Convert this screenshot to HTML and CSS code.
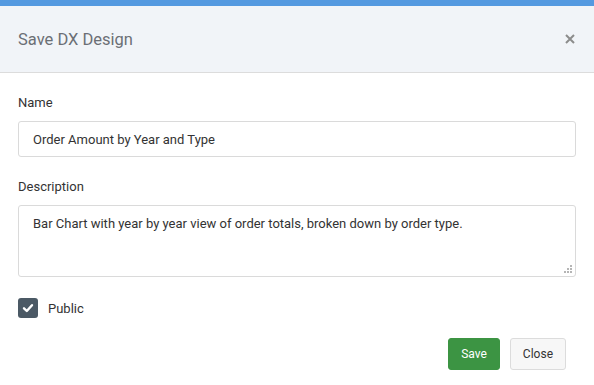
FILE: index.html
```html
<!DOCTYPE html>
<html>
<head>
    <title>Save DX Design</title>
    <link rel="stylesheet" href="styles.css">
</head>
<body>
    <div class="modal">
        <div class="modal-header">
            <h4 class="modal-title">Save DX Design</h4>
            <button class="close-x" type="button" aria-label="Close">
                <svg width="10" height="10" viewBox="0 0 10 10">
                    <path d="M1 1 L9 9 M9 1 L1 9" stroke="#8c8c8c" stroke-width="2"/>
                </svg>
            </button>
        </div>
        <div class="modal-body">
            <form class="form">
                <div class="form-group">
                    <label for="name">Name</label>
                    <input type="text" id="name" value="Order Amount by Year and Type">
                </div>
                <div class="form-group">
                    <label for="description">Description</label>
                    <div class="textarea-wrap">
                        <textarea id="description">Bar Chart with year by year view of order totals, broken down by order type.</textarea>
                        <svg class="grip" width="8" height="8" viewBox="0 0 8 8">
                            <rect x="6" y="0" width="2" height="2" fill="#b5b5b5"/>
                            <rect x="3" y="3" width="2" height="2" fill="#b5b5b5"/>
                            <rect x="6" y="3" width="2" height="2" fill="#b5b5b5"/>
                            <rect x="0" y="6" width="2" height="2" fill="#b5b5b5"/>
                            <rect x="3" y="6" width="2" height="2" fill="#b5b5b5"/>
                            <rect x="6" y="6" width="2" height="2" fill="#b5b5b5"/>
                        </svg>
                    </div>
                </div>
                <div class="check-row">
                    <span class="check-box">
                        <svg width="12" height="12" viewBox="0 0 12 12">
                            <path d="M2 6.3 L4.8 9 L10 3.2" fill="none" stroke="#fff" stroke-width="2.4" stroke-linecap="round" stroke-linejoin="round"/>
                        </svg>
                    </span>
                    <span class="check-label">Public</span>
                </div>
                <div class="actions">
                    <a href="#" class="btn btn-save">Save</a>
                    <a href="#" class="btn btn-close">Close</a>
                </div>
            </form>
        </div>
    </div>
</body>
</html>
```

FILE: styles.css
```css
body {
    margin: 0;
    background-color: #fff;
    font-family: 'Roboto', sans-serif;
    color: #333;
}

.modal {
    border-top: 6px solid #5499e0;
}

.modal-header {
    display: flex;
    align-items: center;
    justify-content: space-between;
    height: 66px;
    padding: 0 18px;
    background-color: #f1f4f8;
    border-bottom: 1px solid #dcdcdc;
}

.modal-title {
    margin: 0;
    font-size: 16.5px;
    font-weight: normal;
    color: #6b6f75;
}

.close-x {
    display: flex;
    border: none;
    background: none;
    padding: 0;
    margin-right: 1px;
    cursor: pointer;
}

.modal-body {
    padding: 20px 18px 15px;
}

.form-group {
    margin-bottom: 20px;
}

label {
    display: block;
    font-size: 13px;
    line-height: 20px;
    margin-bottom: 8px;
}

input,
textarea {
    display: block;
    width: 100%;
    box-sizing: border-box;
    border: 1px solid #dadada;
    border-radius: 3px;
    font-family: 'Roboto', sans-serif;
    font-size: 13px;
    color: #333;
    padding: 0 14px;
}

input {
    height: 36px;
}

.textarea-wrap {
    position: relative;
}

textarea {
    height: 72px;
    padding-top: 8px;
    line-height: 20px;
    resize: none;
}

.grip {
    position: absolute;
    right: 4px;
    bottom: 4px;
}

.check-row {
    display: flex;
    align-items: center;
    gap: 10px;
    margin-top: 21px;
}

.check-box {
    display: flex;
    align-items: center;
    justify-content: center;
    width: 20px;
    height: 20px;
    border-radius: 3px;
    background-color: #4b5965;
}

.check-label {
    font-size: 13px;
}

.actions {
    display: flex;
    justify-content: flex-end;
    gap: 10px;
    margin-top: 20px;
    padding-right: 10px;
}

.btn {
    display: inline-block;
    height: 32px;
    line-height: 30px;
    box-sizing: border-box;
    padding: 0 12px;
    border: 1px solid transparent;
    border-radius: 3px;
    font-size: 12px;
    text-decoration: none;
}

.btn-save {
    background-color: #3c9443;
    border-color: #3c9443;
    color: #fff;
}

.btn-close {
    background-color: #f7f7f7;
    border-color: #dcdcdc;
    color: #333;
}
```
